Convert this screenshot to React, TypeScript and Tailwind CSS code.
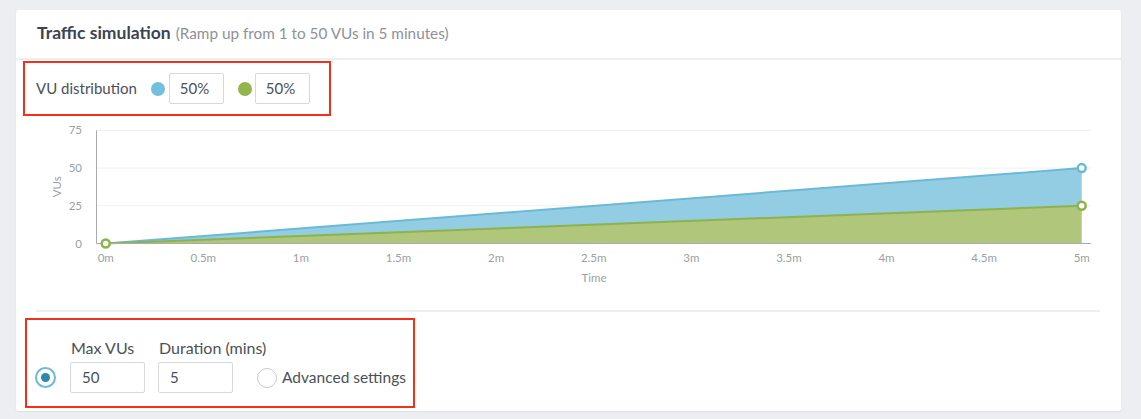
import React from 'react';

const FONT = { fontFamily: 'Lato, "Open Sans", sans-serif' };

// chart geometry, in svg coordinates (svg sits at card x=0, page y=116)
const X0 = 89.7;
const X5 = 1065.7;
const AXIS_X = 80.5;
const AXIS_END = 1075;
const Y0 = 127.5;
const STEP = 37.7;

const yOf = (v: number) => Y0 - (v / 25) * STEP;
const xOf = (m: number) => X0 + ((X5 - X0) / 5) * m;

const X_TICKS = ['0m', '0.5m', '1m', '1.5m', '2m', '2.5m', '3m', '3.5m', '4m', '4.5m', '5m'];

function Chart() {
  const yb = yOf(50);
  const yg = yOf(25);
  return (
    <svg width={1105} height={194} className="block" style={FONT}>
      {[25, 50, 75].map((v) => (
        <line key={v} x1={AXIS_X} x2={AXIS_END} y1={yOf(v)} y2={yOf(v)} stroke="#eff0f2" strokeWidth={1} />
      ))}
      <polygon points={`${X0},${Y0} ${X5},${yb} ${X5},${yg}`} fill="#93cde3" />
      <polygon points={`${X0},${Y0} ${X5},${yg} ${X5},${Y0}`} fill="#afc67b" />
      <line x1={X0} y1={Y0} x2={X5} y2={yb} stroke="#6cb9d6" strokeWidth={2} />
      <line x1={X0} y1={Y0} x2={X5} y2={yg} stroke="#8db34a" strokeWidth={2} />
      <line x1={AXIS_X} x2={AXIS_X} y1={yOf(75)} y2={Y0} stroke="#a9abaf" strokeWidth={1} />
      <line x1={AXIS_X} x2={AXIS_END} y1={Y0} y2={Y0} stroke="#a9abaf" strokeWidth={1} />
      <circle cx={X5} cy={yb} r={4} fill="#fff" stroke="#6cb9d6" strokeWidth={2.5} />
      <circle cx={X5} cy={yg} r={4} fill="#fff" stroke="#8db34a" strokeWidth={2.5} />
      <circle cx={X0} cy={Y0} r={4} fill="#fff" stroke="#8db34a" strokeWidth={2.5} />
      {[0, 25, 50, 75].map((v) => (
        <text key={v} x={66} y={yOf(v) + 4} textAnchor="end" fontSize={11.5} fill="#9b9fa5">
          {v}
        </text>
      ))}
      {X_TICKS.map((t, i) => (
        <text key={t} x={xOf(i / 2)} y={145.5} textAnchor="middle" fontSize={11.5} fill="#9b9fa5">
          {t}
        </text>
      ))}
      <text x={42} y={70.7} transform="rotate(-90 42 70.7)" textAnchor="middle" dominantBaseline="middle" fontSize={11.5} fill="#9b9fa5">
        VUs
      </text>
      <text x={578} y={166} textAnchor="middle" fontSize={11.5} fill="#9b9fa5">
        Time
      </text>
    </svg>
  );
}

function Field({ label, value }: { label: string; value: string }) {
  return (
    <div className="w-[75px] flex flex-col">
      <span className="whitespace-nowrap text-[16px] leading-[18px] text-[#4b5058] pl-[1px] mb-[5px]">{label}</span>
      <div className="w-[75px] h-[31px] border border-[#d6d9dd] rounded-[2px] flex items-center pl-[11px] text-[15px] text-[#4b5058]">
        {value}
      </div>
    </div>
  );
}

export default function App() {
  return (
    <div className="w-full h-[419px] bg-[#eceef1] pt-[10px] pl-[16px]" style={FONT}>
      <div className="w-[1105px] h-[401px] bg-white rounded-[3px] shadow-[0_1px_2px_rgba(0,0,0,0.06)] flex flex-col">
        <div className="h-[50px] flex items-center pl-[21px] border-b-2 border-[#eceef1] pb-[2px]">
          <span className="text-[17.5px] font-bold text-[#3d4350]">Traffic simulation</span>
          <span className="text-[15.3px] text-[#8d929a] ml-[5px]">(Ramp up from 1 to 50 VUs in 5 minutes)</span>
        </div>

        <div className="ml-[7px] mt-[1px] w-[308px] h-[55px] border-2 border-[#f4301b] flex items-center pl-[11px]">
          <span className="text-[15px] text-[#4b5058]">VU distribution</span>
          <span className="ml-[14px] w-[14px] h-[14px] rounded-full bg-[#73bfdc]" />
          <div className="ml-[4px] w-[55px] h-[31px] border border-[#d6d9dd] rounded-[2px] flex items-center pl-[10px] text-[15px] text-[#4b5058]">
            50%
          </div>
          <span className="ml-[14px] w-[14px] h-[14px] rounded-full bg-[#94b54e]" />
          <div className="ml-[3px] w-[55px] h-[31px] border border-[#d6d9dd] rounded-[2px] flex items-center pl-[10px] text-[15px] text-[#4b5058]">
            50%
          </div>
        </div>

        <Chart />

        <div className="ml-[20px] mr-[21px] border-t-2 border-[#eceef1]" />

        <div className="ml-[9px] mt-[6px] w-[390px] h-[90px] border-2 border-[#f4301b] flex items-end pl-[8px] pb-[13px]">
          <span className="mb-[5px] w-[21px] h-[21px] rounded-full border-2 border-[#6db8d8] flex items-center justify-center">
            <span className="w-[9px] h-[9px] rounded-full bg-[#2f87ad]" />
          </span>
          <div className="ml-[14px]">
            <Field label="Max VUs" value="50" />
          </div>
          <div className="ml-[13px]">
            <Field label="Duration (mins)" value="5" />
          </div>
          <div className="ml-[24px] flex items-center h-[31px] whitespace-nowrap">
            <span className="w-[20px] h-[20px] rounded-full border-[1.5px] border-[#c6c9ce]" />
            <span className="ml-[5px] text-[15.5px] text-[#4b5058]">Advanced settings</span>
          </div>
        </div>
      </div>
    </div>
  );
}
